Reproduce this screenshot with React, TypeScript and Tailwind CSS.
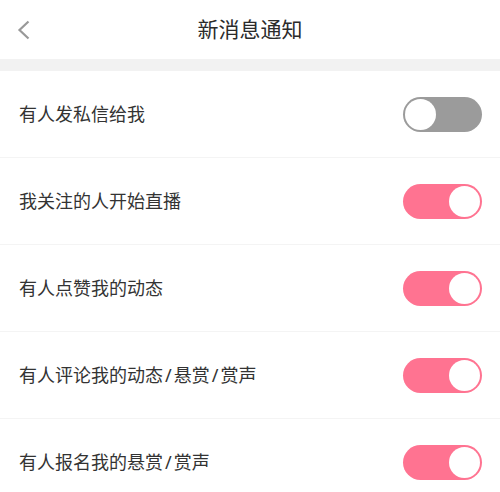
import { useState } from "react";

const items = [
  { label: "有人发私信给我", on: false },
  { label: "我关注的人开始直播", on: true },
  { label: "有人点赞我的动态", on: true },
  { label: "有人评论我的动态/悬赏/赏声", on: true },
  { label: "有人报名我的悬赏/赏声", on: true },
];

function Toggle({ on, onClick }: { on: boolean; onClick: () => void }) {
  return (
    <button
      onClick={onClick}
      className={`flex h-[35px] w-[79px] items-center rounded-full p-[2px] ${
        on ? "justify-end bg-[#ff7391]" : "justify-start bg-[#9b9b9b]"
      }`}
    >
      <span className="block h-[31px] w-[31px] rounded-full bg-white" />
    </button>
  );
}

// slashes in the reference sit with a little air on each side
function Label({ text }: { text: string }) {
  const parts = text.split("/");
  return (
    <p className="text-[18px]">
      {parts.map((p, i) => (
        <span key={i}>
          {i > 0 && <span className="px-[2px]">/</span>}
          {p}
        </span>
      ))}
    </p>
  );
}

export default function App() {
  const [state, setState] = useState(items.map((i) => i.on));
  return (
    <div
      className="w-[500px] bg-white text-[#333]"
      style={{ fontFamily: '"Noto Sans", "Noto Sans CJK SC", sans-serif' }}
    >
      <div className="relative flex h-[59px] items-center justify-center">
        <svg
          className="absolute left-[16px] top-[20px]"
          width="16"
          height="20"
          viewBox="0 0 16 20"
          fill="none"
        >
          <path d="M12.5 1.5 L3.5 10 L12.5 18.5" stroke="#999" strokeWidth="2.2" />
        </svg>
        <p className="text-[21px] text-[#2b2b2b]">新消息通知</p>
      </div>
      <div className="h-[12px] bg-[#f2f2f2]" />
      {items.map((item, i) => (
        <div
          key={item.label}
          className="flex h-[87px] items-center justify-between border-b border-[#f4f4f4] pl-[19px] pr-[18px]"
        >
          <Label text={item.label} />
          <Toggle
            on={state[i]}
            onClick={() => setState(state.map((v, j) => (j === i ? !v : v)))}
          />
        </div>
      ))}
    </div>
  );
}
